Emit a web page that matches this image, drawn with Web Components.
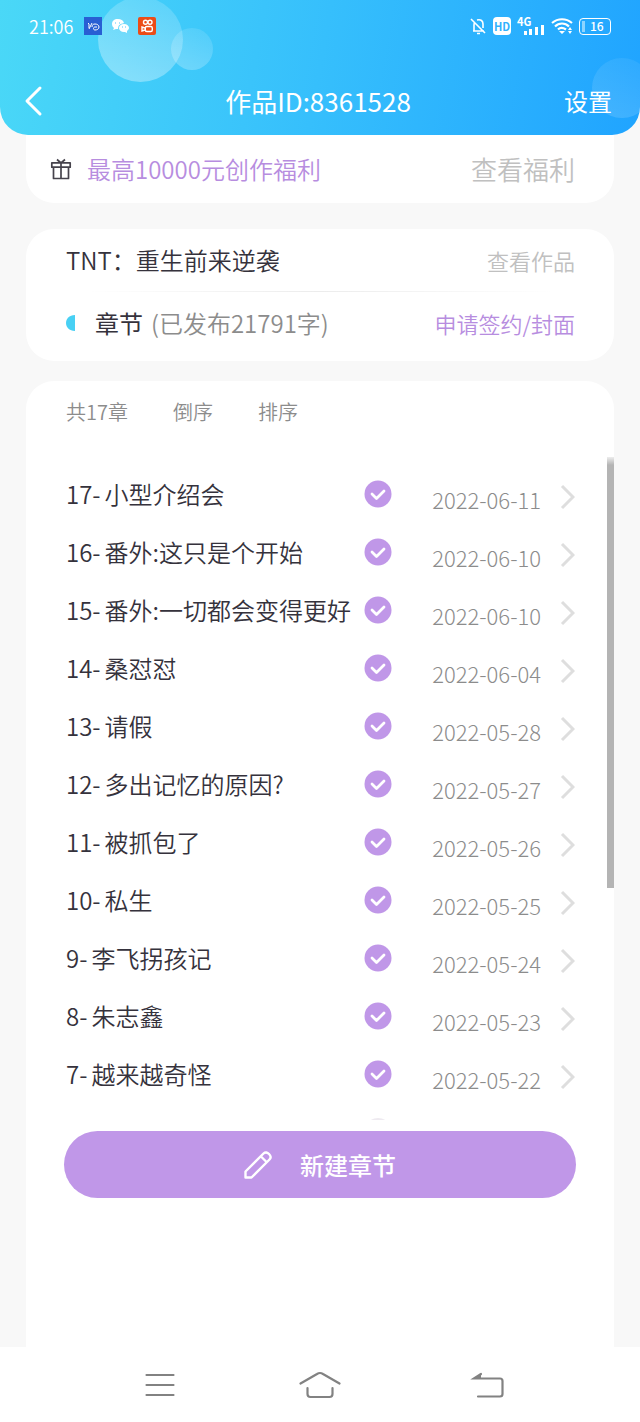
<!DOCTYPE html>
<html lang="zh-CN">
<head>
<meta charset="utf-8">
<meta name="viewport" content="width=device-width, initial-scale=1">
<title>作品管理</title>
<style>
  html, body {
    height: 100%;
    margin: 0;
  }

  body {
    --purple: #c097e8;
    --purple-text: #b78ddf;
    --ink: #35323c;
    --grey: #8c8c8c;
    --pale: #c0c0c0;
    --side: 26px;
    background-color: #f8f8f8;
    color: var(--ink);
    font-family: "Noto Sans CJK SC", "Noto Sans", sans-serif;
    font-weight: 350;
    font-size: 24px;
    line-height: 32px;
  }
</style>
</head>
<body>
<work-page></work-page>

<script>
const icons = {
  novel: [18, 18, `<path fill="#285fd3" d="M0 0h18v18H0z"/><path d="M4 6l1 1v4M8 6l-3 6M8 10c0-2 1-3 3-3s4 1 4 3-2 3-4 3-2-3 0-3h2" stroke="#fff" fill="none"/>`],
  wechat: [18, 18, `<path fill="#fff" d="M7 2C3 2 1 4 1 7c0 2 1 3 2 4l-1 2 3-1h2c0-4 2-5 6-6-1-3-3-4-6-4z"/><path fill="#fff" d="M13 7c-3 0-5 2-5 4s2 4 5 4h1l2 1v-2c1-1 2-2 2-3 0-2-2-4-5-4z"/><path d="M4 6h1M8 6h1M11 10h1M14 10h1" stroke="#55c8fa"/>`],
  kwai: [18, 18, `<rect width="18" height="18" rx="2" fill="#eb4c17"/><g fill="none" stroke="#fff" stroke-width="1.4"><circle cx="7.5" cy="5.3" r="2"/><circle cx="12" cy="5.3" r="2"/><rect x="7.3" y="9.5" width="7" height="5" rx="1.5"/><path d="M7 11l-3-1v4l3-1"/></g>`],
  mute: [18, 18, `<path d="M4 14h11M5 14V8c0-1 0-2 1-3M8 3c4-1 6 1 6 4v4M8 16.5h3M2 2l14 14" fill="none" stroke="#fff" stroke-width="1.6"/>`],
  signal: [28, 20, `<path fill="#fff" d="M7 15h3v4H7zM12 13h3v6h-3zM18 11h3v8h-3zM24 9h3v10h-3z"/>`],
  wifi: [22, 18, `<path d="M1 6c6-5 14-5 20 0M4 9.500c4-4 10-4 14 0M7 12.500c2-2 5-2 8 0" fill="none" stroke="#fff" stroke-width="2.200"/><path fill="#fff" d="M8 14h6l-3 3zM17 13l2-3 2 3zM17 14h4l-2 3z"/>`],
  back: [20, 32, `<path d="M16 3L3 16l13 13" fill="none" stroke="#fff" stroke-width="3" stroke-linecap="round" stroke-linejoin="round"/>`],
  gift: [22, 22, `<path d="M1.800 4.800h18.400v4.400H1.800zM3.500 9.500v11h15v-11M11 5v15.500M7 1.500L11 5l4-3.500" fill="none" stroke="#46434c" stroke-width="1.700" stroke-linejoin="round"/>`],
  half: [9, 16, `<path d="M9 0v16C3 16 0 12 0 8s3-8 9-8z" fill="#48d0f4"/>`],
  check: [28, 28, `<circle cx="14" cy="14" r="13.500" fill="#c097e8"/><path d="M8 14l4.500 4.500L20 11" fill="none" stroke="#fff" stroke-width="2.800" stroke-linecap="round" stroke-linejoin="round"/>`],
  arrow: [15, 26, `<path d="M2 2l11 11L2 24" fill="none" stroke="#dedede" stroke-width="3"/>`],
  pencil: [28, 28, `<path d="M1.500 26.500v-6L19.500 2.500c2-2 4-1 5.500.5s2.500 3.500.5 5.500L7.500 26.500zM17 5.500l5.500 5.500" fill="none" stroke="#fff" stroke-width="2.400" stroke-linejoin="round"/>`],
  menu: [30, 24, `<path d="M1.500 2h27M1.500 12h27M1.500 22h27" stroke="#828282" stroke-width="2.200" stroke-linecap="round"/>`],
  home: [42, 28, `<path d="M1.500 12.500L18 3q3-2 6 0l16.500 9.500M8.500 17v6q0 3 3 3h19q3 0 3-3v-6" fill="none" stroke="#828282" stroke-width="2.200" stroke-linecap="round"/>`],
  undo: [48, 26, `<path d="M25 2l-7 4.500h26q2.500 0 2.500 2.500v13q0 2.500-2.500 2.500H22" fill="none" stroke="#828282" stroke-width="2.200" stroke-linecap="round"/><path d="M25 2l-7 4.500h7z" fill="#828282"/>`],
};

class AppIcon extends HTMLElement {
  constructor() {
    super();
    this.attachShadow({ mode: "open" });
  }

  connectedCallback() {
    const [width, height, shape] = icons[this.getAttribute("name")];
    this.shadowRoot.innerHTML = /* html */ `
      <style>
        :host { display: block; flex: none; }
        svg { display: block; }
      </style>
      <svg width="${width}" height="${height}" viewBox="0 0 ${width} ${height}" aria-hidden="true">${shape}</svg>
    `;
  }
}
customElements.define("app-icon", AppIcon);

// Creates an element class with static markup in its shadow root.
function define(name, html) {
  const template = document.createElement("template");
  template.innerHTML = html;
  customElements.define(name, class extends HTMLElement {
    constructor() {
      super();
      this.attachShadow({ mode: "open" });
      this.shadowRoot.appendChild(template.content.cloneNode(true));
    }
  });
}

const reset = /* css */ `
  * { box-sizing: border-box; }
  button { border: none; background: none; padding: 0; color: inherit; font: inherit; cursor: pointer; }
  a { color: inherit; text-decoration: none; }
`;

define("status-bar", /* html */ `
  <style>
    :host {
      display: flex;
      align-items: center;
      justify-content: space-between;
      padding: 0 29px;
      color: #ffffff;
      font-size: 18px;
      line-height: 20px;
    }

    .group { display: flex; align-items: center; gap: 9px; }
    .group_right { gap: 6px; }
    .time { width: 46px; }

    .hd {
      width: 18px;
      border-radius: 4px;
      background-color: #ffffff;
      color: #31b1fd;
      font-size: 11px;
      font-weight: 700;
      line-height: 18px;
      text-align: center;
    }

    .network { position: relative; }

    .network span {
      position: absolute;
      top: -1px;
      left: 0;
      font-size: 11px;
      font-weight: 700;
      line-height: 12px;
    }

    .battery {
      display: flex;
      align-items: center;
      width: 32px;
      height: 17px;
      box-sizing: border-box;
      border: 1px solid #ffffff;
      border-radius: 4px;
      padding: 2px;
      gap: 5px;
      font-size: 12px;
      font-weight: 500;
      line-height: 12px;
    }

    .battery::before {
      content: "";
      width: 3px;
      height: 11px;
      background-color: #8ed5ff;
    }
  </style>
  <div class="group">
    <span class="time">21:06</span>
    <app-icon name="novel"></app-icon>
    <app-icon name="wechat"></app-icon>
    <app-icon name="kwai"></app-icon>
  </div>
  <div class="group group_right">
    <app-icon name="mute"></app-icon>
    <span class="hd">HD</span>
    <div class="network"><app-icon name="signal"></app-icon><span>4G</span></div>
    <app-icon name="wifi"></app-icon>
    <span class="battery">16</span>
  </div>
`);

define("page-header", /* html */ `
  <style>
    ${reset}
    :host {
      display: block;
      position: relative;
      overflow: hidden;
      flex: none;
      padding: 16px 0 18px;
      border-radius: 0 0 28px 28px;
      background-image: linear-gradient(100deg, #4ad8f7, #36bffc 50%, #20a4ff);
      color: #ffffff;
    }

    /* bubbles float behind the bars */
    i {
      position: absolute;
      border-radius: 50%;
      background-image: linear-gradient(200deg, #ffffff22, #ffffff60);
    }

    .big { left: 98px; top: -3px; width: 85px; height: 85px; }
    .small { left: 171px; top: 28px; width: 42px; height: 42px; opacity: 0.7; }
    .edge { right: -12px; top: 58px; width: 60px; height: 60px; opacity: 0.4; }

    status-bar, .bar { position: relative; }

    .bar {
      display: grid;
      grid-template-columns: 1fr auto 1fr;
      align-items: center;
      padding: 0 28px 0 24px;
      margin-top: 49px;
    }

    h1 { margin: 0; font-size: 26px; font-weight: 400; line-height: 32px; }
    .bar > :first-child { justify-self: start; }
    .bar > :last-child { justify-self: end; font-weight: 400; }
  </style>
  <i class="big"></i><i class="small"></i><i class="edge"></i>
  <status-bar></status-bar>
  <div class="bar">
    <button type="button" aria-label="返回"><app-icon name="back"></app-icon></button>
    <h1><slot></slot></h1>
    <button type="button">设置</button>
  </div>
`);

define("info-card", /* html */ `
  <style>
    :host {
      display: block;
      flex: none;
      margin: 0 var(--side);
      border-radius: 28px;
      background-color: #ffffff;
    }

    :host([attached]) { border-radius: 0 0 28px 28px; }
  </style>
  <slot></slot>
`);

define("info-row", /* html */ `
  <style>
    :host {
      display: flex;
      align-items: center;
      justify-content: space-between;
      padding: 0 39px 0 40px;
      white-space: nowrap;
    }

    .label { display: flex; align-items: center; }
  </style>
  <div class="label"><slot></slot></div>
  <slot name="action"></slot>
`);

class ChapterItem extends HTMLElement {
  constructor(chapter) {
    super();
    this.attachShadow({ mode: "open" });
    this.shadowRoot.innerHTML = /* html */ `
      <style>
        :host { display: block; }

        a {
          display: flex;
          align-items: center;
          height: 58px;
          padding: 0 39px 0 40px;
          color: inherit;
          text-decoration: none;
          white-space: nowrap;
        }

        .title { flex: 1; }
        .title span { margin-left: 4px; }

        time {
          margin: 0 19px 0 40px;
          padding-top: 10px;
          color: var(--grey);
          font-size: 22px;
          font-weight: 300;
        }

        .arrow { padding-top: 6px; }
      </style>
      <a href="#chapter-${chapter.no}">
        <span class="title">${chapter.no}-<span>${chapter.title}</span></span>
        <app-icon name="check"></app-icon>
        <time>${chapter.date}</time>
        <app-icon class="arrow" name="arrow"></app-icon>
      </a>
    `;
  }
}
customElements.define("chapter-item", ChapterItem);

const chapters = [
  { no: 17, title: "小型介绍会", date: "2022-06-11" },
  { no: 16, title: "番外:这只是个开始", date: "2022-06-10" },
  { no: 15, title: "番外:一切都会变得更好", date: "2022-06-10" },
  { no: 14, title: "桑怼怼", date: "2022-06-04" },
  { no: 13, title: "请假", date: "2022-05-28" },
  { no: 12, title: "多出记忆的原因?", date: "2022-05-27" },
  { no: 11, title: "被抓包了", date: "2022-05-26" },
  { no: 10, title: "私生", date: "2022-05-25" },
  { no: 9, title: "李飞拐孩记", date: "2022-05-24" },
  { no: 8, title: "朱志鑫", date: "2022-05-23" },
  { no: 7, title: "越来越奇怪", date: "2022-05-22" },
];

class ChapterList extends HTMLElement {
  constructor() {
    super();
    this.attachShadow({ mode: "open" });
    this.shadowRoot.innerHTML = /* html */ `
      <style>
        :host {
          display: block;
          position: relative;
          overflow: hidden;
          flex: 1 1 0;
          min-height: 0;
          padding-top: 8px;
        }

        .thumb {
          position: absolute;
          top: 0;
          right: 0;
          width: 7px;
          height: 65%;
          background-image: linear-gradient(#ededed, #b4b4b4 8px);
        }

        .next {
          width: 28px;
          height: 28px;
          margin: 15px 222px 0 auto;
          border-radius: 50%;
          background-color: #eeeaf0;
        }
      </style>
      <div class="items"></div>
      <div class="next"></div>
      <div class="thumb"></div>
    `;
    const items = this.shadowRoot.querySelector(".items");
    chapters.forEach((chapter) => items.appendChild(new ChapterItem(chapter)));
  }
}
customElements.define("chapter-list", ChapterList);

define("chapter-panel", /* html */ `
  <style>
    ${reset}
    :host {
      display: flex;
      flex-direction: column;
      flex: 1;
      min-height: 0;
      margin: 0 var(--side);
      padding-bottom: 149px;
      border-radius: 28px 28px 0 0;
      background-color: #ffffff;
    }

    .sort {
      display: flex;
      gap: 45px;
      padding: 19px 40px 33px;
      color: var(--grey);
      font-size: 20px;
      line-height: 24px;
    }

    .create {
      display: flex;
      align-items: center;
      justify-content: center;
      gap: 28px;
      flex: none;
      height: 67px;
      margin: 11px 38px 0;
      border-radius: 34px;
      background-color: var(--purple);
      color: #ffffff;
      font-weight: 500;
    }
  </style>
  <div class="sort">
    <span>共17章</span>
    <button type="button">倒序</button>
    <button type="button">排序</button>
  </div>
  <chapter-list></chapter-list>
  <button type="button" class="create"><app-icon name="pencil"></app-icon>新建章节</button>
`);

define("system-nav", /* html */ `
  <style>
    ${reset}
    :host {
      display: grid;
      grid-template-columns: repeat(3, 1fr);
      align-items: center;
      flex: none;
      height: 75px;
      padding: 0 80px;
      background-color: #ffffff;
    }

    button { justify-self: center; }
  </style>
  <button type="button" aria-label="最近任务"><app-icon name="menu"></app-icon></button>
  <button type="button" aria-label="主页"><app-icon name="home"></app-icon></button>
  <button type="button" aria-label="返回"><app-icon name="undo"></app-icon></button>
`);

define("work-page", /* html */ `
  <style>
    ${reset}
    :host { display: flex; flex-direction: column; height: 100%; }

    .welfare { padding: 18px 0; margin-bottom: 26px; }
    .welfare info-row { padding-left: 24px; }
    .welfare app-icon { margin-right: 15px; }
    .promo { color: var(--purple-text); }
    .pale { color: var(--pale); font-size: 22px; }
    .welfare .pale { font-size: 26px; }

    .work { padding: 15px 0 22px; margin-bottom: 20px; }
    .strong { font-weight: 400; }
    .work app-icon { margin-right: 20px; }
    .count { margin-left: 8px; color: var(--grey); }
    .apply { color: var(--purple-text); font-size: 22px; }

    hr {
      height: 1px;
      margin: 15px 60px;
      border: none;
      background-image: linear-gradient(90deg, #ffffff, #ececec 50%, #ffffff);
    }
  </style>
  <page-header>作品ID:8361528</page-header>
  <info-card class="welfare" attached>
    <info-row>
      <app-icon name="gift"></app-icon><a class="promo" href="#welfare">最高10000元创作福利</a>
      <a slot="action" class="pale" href="#welfare">查看福利</a>
    </info-row>
  </info-card>
  <info-card class="work">
    <info-row>
      <span>TNT：重生前来逆袭</span>
      <a slot="action" class="pale" href="#work">查看作品</a>
    </info-row>
    <hr>
    <info-row>
      <app-icon name="half"></app-icon><span class="strong">章节</span><span class="count">(已发布21791字)</span>
      <a slot="action" class="apply" href="#apply">申请签约/封面</a>
    </info-row>
  </info-card>
  <chapter-panel></chapter-panel>
  <system-nav></system-nav>
`);
</script>
</body>
</html>
